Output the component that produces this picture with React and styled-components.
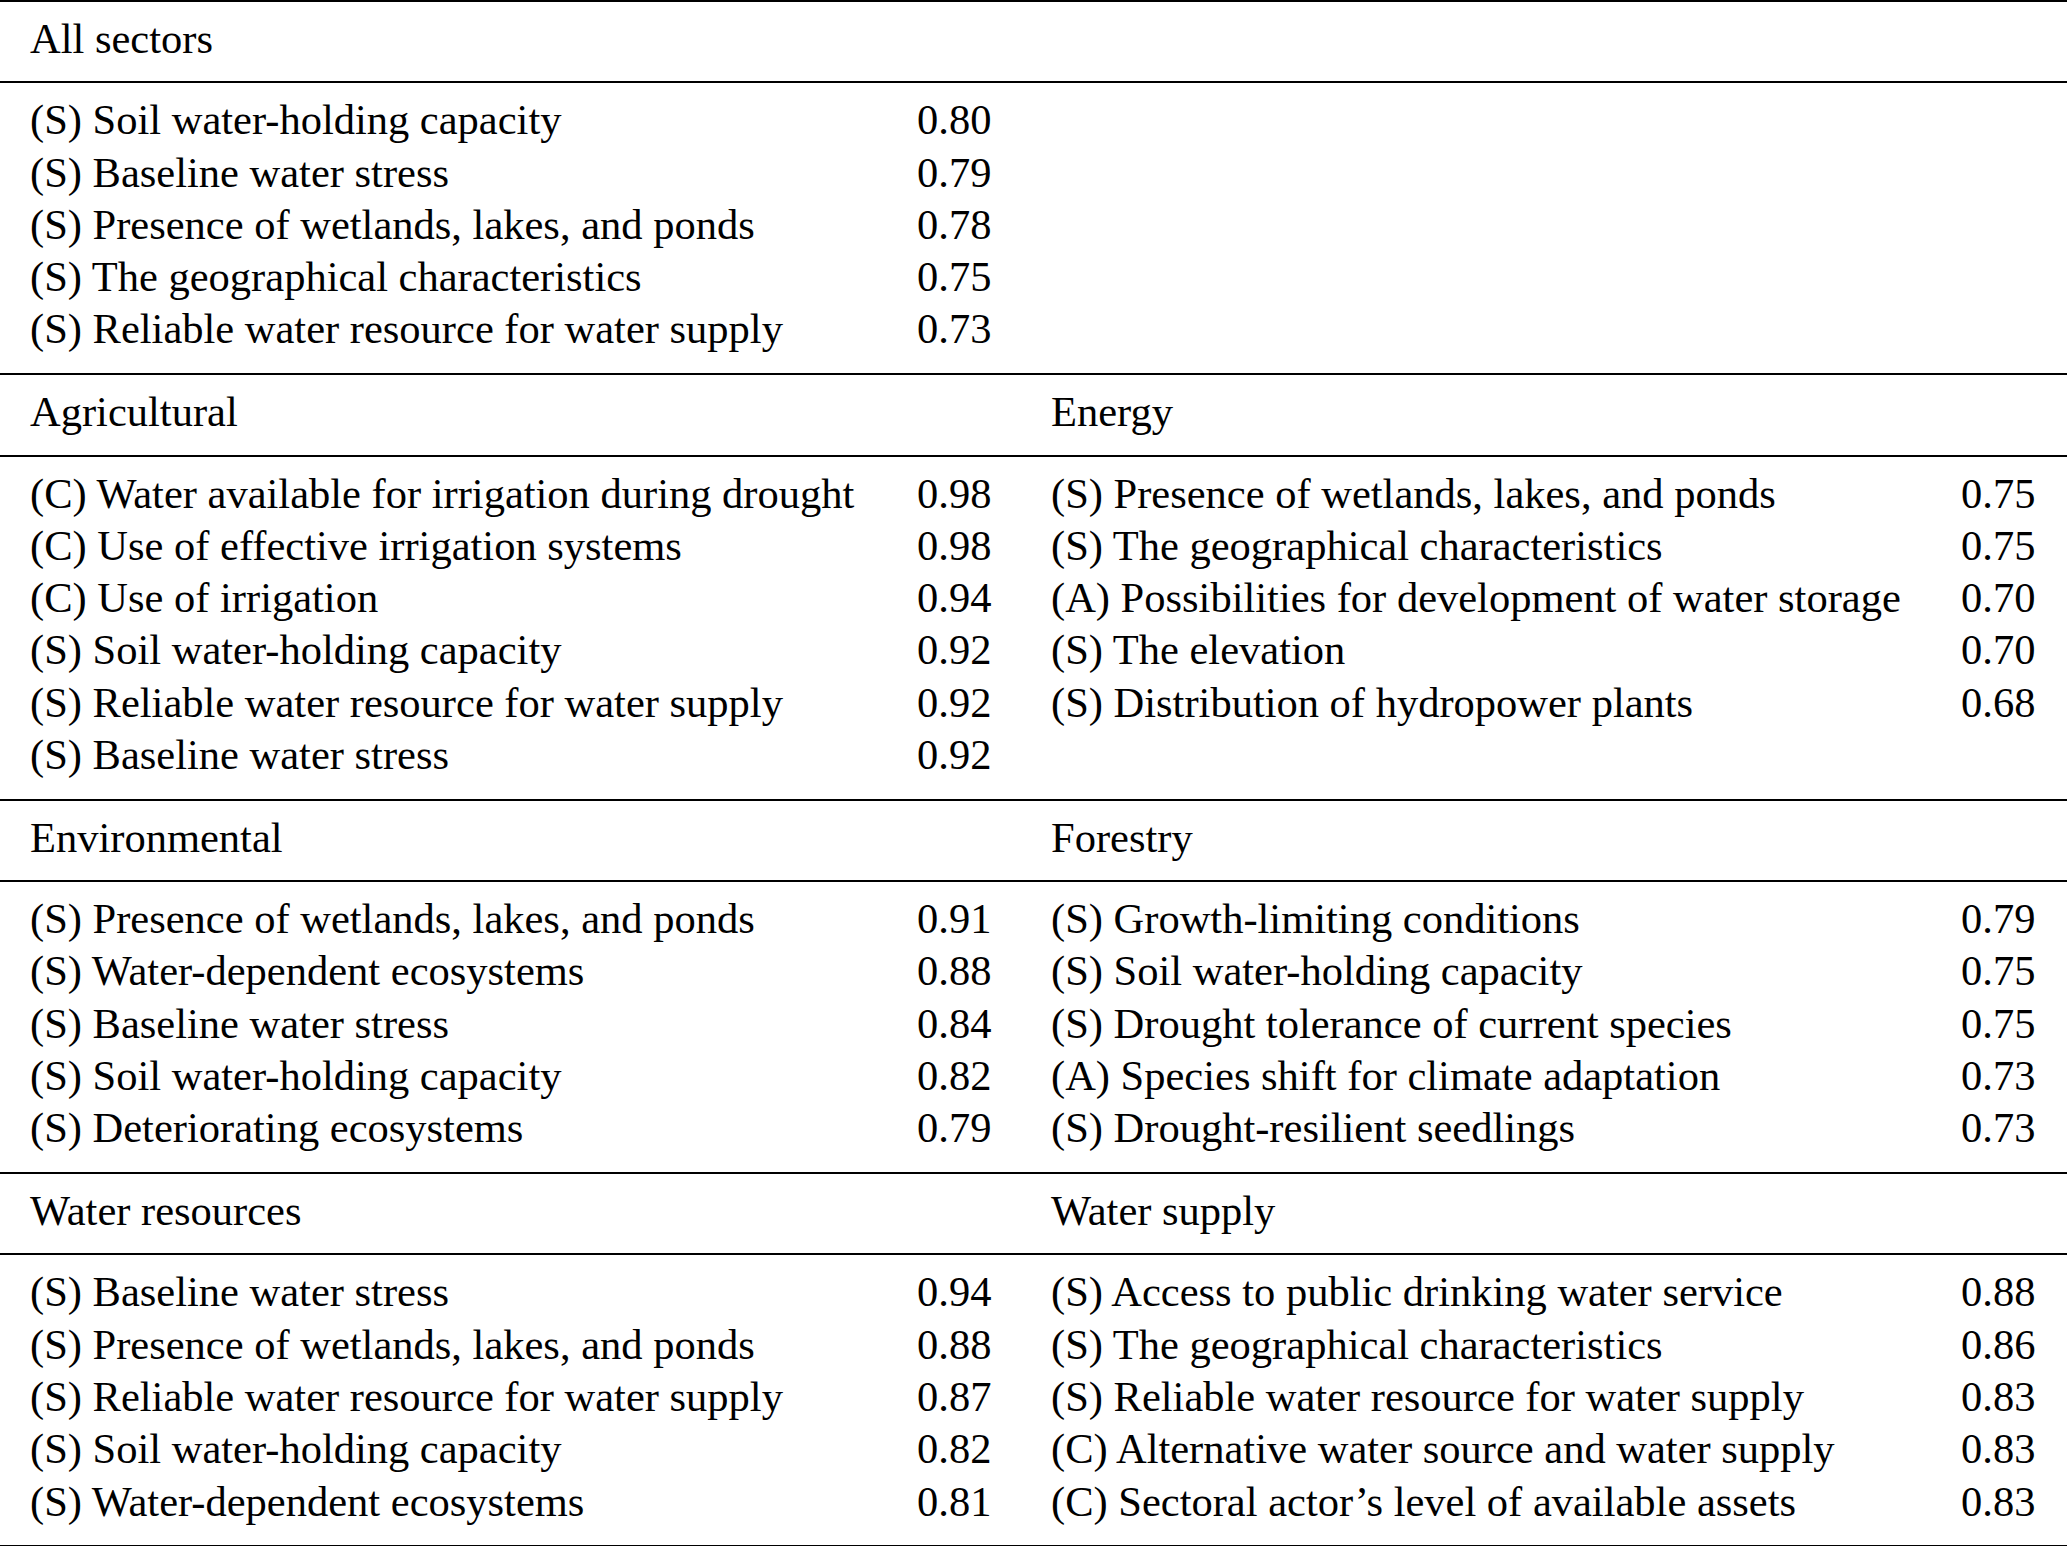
import React from "react";
import styled, { createGlobalStyle } from "styled-components";

const GlobalStyle = createGlobalStyle`
  html, body {
    margin: 0;
    padding: 0;
    background: #fff;
  }
  body {
    font-family: "Liberation Serif", "Times New Roman", serif;
    color: #000;
  }
`;

const sections = [
  {
    left: "All sectors",
    right: null,
    rows: [
      ["(S) Soil water-holding capacity", "0.80"],
      ["(S) Baseline water stress", "0.79"],
      ["(S) Presence of wetlands, lakes, and ponds", "0.78"],
      ["(S) The geographical characteristics", "0.75"],
      ["(S) Reliable water resource for water supply", "0.73"],
    ],
  },
  {
    left: "Agricultural",
    right: "Energy",
    rows: [
      ["(C) Water available for irrigation during drought", "0.98", "(S) Presence of wetlands, lakes, and ponds", "0.75"],
      ["(C) Use of effective irrigation systems", "0.98", "(S) The geographical characteristics", "0.75"],
      ["(C) Use of irrigation", "0.94", "(A) Possibilities for development of water storage", "0.70"],
      ["(S) Soil water-holding capacity", "0.92", "(S) The elevation", "0.70"],
      ["(S) Reliable water resource for water supply", "0.92", "(S) Distribution of hydropower plants", "0.68"],
      ["(S) Baseline water stress", "0.92"],
    ],
  },
  {
    left: "Environmental",
    right: "Forestry",
    rows: [
      ["(S) Presence of wetlands, lakes, and ponds", "0.91", "(S) Growth-limiting conditions", "0.79"],
      ["(S) Water-dependent ecosystems", "0.88", "(S) Soil water-holding capacity", "0.75"],
      ["(S) Baseline water stress", "0.84", "(S) Drought tolerance of current species", "0.75"],
      ["(S) Soil water-holding capacity", "0.82", "(A) Species shift for climate adaptation", "0.73"],
      ["(S) Deteriorating ecosystems", "0.79", "(S) Drought-resilient seedlings", "0.73"],
    ],
  },
  {
    left: "Water resources",
    right: "Water supply",
    rows: [
      ["(S) Baseline water stress", "0.94", "(S) Access to public drinking water service", "0.88"],
      ["(S) Presence of wetlands, lakes, and ponds", "0.88", "(S) The geographical characteristics", "0.86"],
      ["(S) Reliable water resource for water supply", "0.87", "(S) Reliable water resource for water supply", "0.83"],
      ["(S) Soil water-holding capacity", "0.82", "(C) Alternative water source and water supply", "0.83"],
      ["(S) Water-dependent ecosystems", "0.81", "(C) Sectoral actor\u2019s level of available assets", "0.83"],
    ],
  },
];

const Table = styled.div`
  width: 2067px;
  border-top: 2px solid #000;
  border-bottom: 3px solid #000;
  font-size: 42.5px;
  line-height: 52.3px;
`;

const Section = styled.section`
  & + & {
    border-top: 2px solid #000;
  }
`;

const Grid = styled.div`
  display: grid;
  grid-template-columns: 887px 134px 910px 1fr;
  padding-left: 30px;
  white-space: nowrap;
`;

const Header = styled(Grid)`
  padding-top: 11px;
  padding-bottom: 16px;
  border-bottom: 2px solid #000;
`;

const Body = styled(Grid)`
  padding-top: 11px;
  padding-bottom: 17.5px;
`;

const Cell = styled.div`
  grid-column: ${(p) => p.$col};
`;

const Value = styled.div`
  font-variant-numeric: tabular-nums;
`;

export default function App() {
  return (
    <>
      <GlobalStyle />
      <Table>
        {sections.map((s) => (
          <Section key={s.left}>
            <Header>
              <Cell $col={1}>{s.left}</Cell>
              {s.right && <Cell $col={3}>{s.right}</Cell>}
            </Header>
            <Body>
              {s.rows.map((r, i) => (
                <React.Fragment key={i}>
                  <Cell $col={1}>{r[0]}</Cell>
                  <Value>{r[1]}</Value>
                  <Cell $col={3}>{r[2] || "\u00a0"}</Cell>
                  <Value>{r[3] || ""}</Value>
                </React.Fragment>
              ))}
            </Body>
          </Section>
        ))}
      </Table>
    </>
  );
}
